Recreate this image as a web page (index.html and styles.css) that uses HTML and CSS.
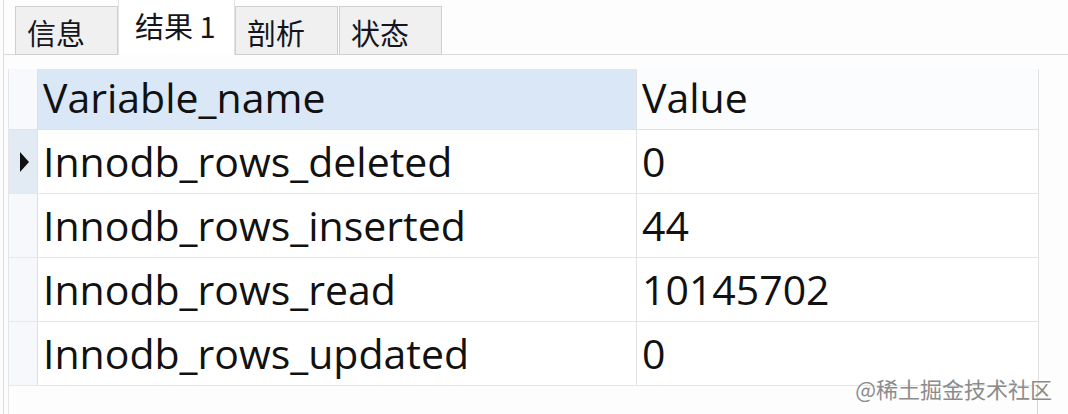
FILE: index.html
```html
<!DOCTYPE html>
<html lang="zh">
<head>
<meta charset="utf-8">
<title>结果 1</title>
<link rel="stylesheet" href="styles.css">
</head>
<body>
<div class="window">
  <div class="tabs">
    <div class="tab">信息</div>
    <div class="tab active">结果 1</div>
    <div class="tab">剖析</div>
    <div class="tab">状态</div>
  </div>
  <div class="pane">
    <div class="grid">
      <div class="ind head-ind"></div>
      <div class="cell head sorted">Variable_name</div>
      <div class="cell head">Value</div>

      <div class="ind current"><span class="arrow"></span></div>
      <div class="cell">Innodb_rows_deleted</div>
      <div class="cell">0</div>

      <div class="ind"></div>
      <div class="cell">Innodb_rows_inserted</div>
      <div class="cell">44</div>

      <div class="ind"></div>
      <div class="cell">Innodb_rows_read</div>
      <div class="cell">10145702</div>

      <div class="ind"></div>
      <div class="cell">Innodb_rows_updated</div>
      <div class="cell">0</div>
    </div>
  </div>
  <div class="watermark">@稀土掘金技术社区</div>
</div>
</body>
</html>
```

FILE: styles.css
```css
html, body {
  margin: 0;
  padding: 0;
}

body {
  width: 1068px;
  height: 414px;
  overflow: hidden;
  background: #fdfdfd;
  font-family: "Open Sans", "Noto Sans", "Noto Sans CJK SC", sans-serif;
  color: #111;
}

.window {
  position: relative;
  margin-left: 3px;
  height: 414px;
  border-left: 1px solid #dcdde0;
  box-sizing: border-box;
}

.tabs {
  display: flex;
  align-items: flex-end;
  height: 54px;
  padding-left: 11px;
  border-bottom: 1px solid #dadada;
  box-sizing: content-box;
}

.tab {
  box-sizing: border-box;
  width: 103px;
  height: 49px;
  margin-bottom: -1px;
  padding-left: 11px;
  display: flex;
  align-items: center;
  padding-top: 4px;
  background: #f0f0f0;
  border: 1px solid #cfcfcf;
  font-family: "Noto Sans CJK SC", "Noto Sans", sans-serif;
  font-size: 29px;
  color: #151520;
  line-height: 1;
}

.tab + .tab {
  margin-left: 1px;
}

.tab.active {
  width: 117px;
  height: 56px;
  padding-left: 16px;
  padding-top: 0;
  padding-bottom: 4px;
  background: #ffffff;
  border-color: #e2e2e2;
  border-bottom: none;
  margin-left: 0;
}

.tab.active + .tab {
  margin-left: 0;
}

.pane {
  padding-top: 14px;
  padding-left: 4px;
}

.grid {
  display: grid;
  grid-template-columns: 29px 599px 402px;
  grid-template-rows: 61px repeat(4, 64px);
  width: 1030px;
  height: 345px;
  align-content: start;
  box-sizing: border-box;
  border-left: 1px solid #e4e6ea;
  border-right: 1px solid #d6d6d6;
}

.ind {
  background: #f6f8fb;
  border-bottom: 1px solid #e6e8ec;
  border-right: 1px solid #dde1e6;
  display: flex;
  align-items: center;
  padding-left: 11px;
}

.ind.head-ind {
  background: #f7f9fc;
  border-bottom-color: #dfe4ea;
}

.ind.current {
  background: #e2eaf4;
}

.arrow {
  display: block;
  width: 0;
  height: 0;
  border-top: 10px solid transparent;
  border-bottom: 10px solid transparent;
  border-left: 9px solid #111;
}

.cell {
  display: flex;
  align-items: center;
  padding-left: 5px;
  font-size: 41px;
  line-height: 1;
  color: #111;
  border-bottom: 1px solid #e6e6e6;
  border-right: 1px solid #e2e2e2;
  white-space: nowrap;
  background: #ffffff;
}

.cell.head {
  background: #fbfcfd;
  border-bottom-color: #dde2e8;
  padding-bottom: 4px;
}

.cell.head.sorted {
  background: #dae7f6;
}

.watermark {
  position: absolute;
  right: 16px;
  bottom: 15px;
  font-family: "Noto Sans CJK SC", sans-serif;
  font-size: 22px;
  color: #8c8c8c;
  line-height: 1;
}
```
